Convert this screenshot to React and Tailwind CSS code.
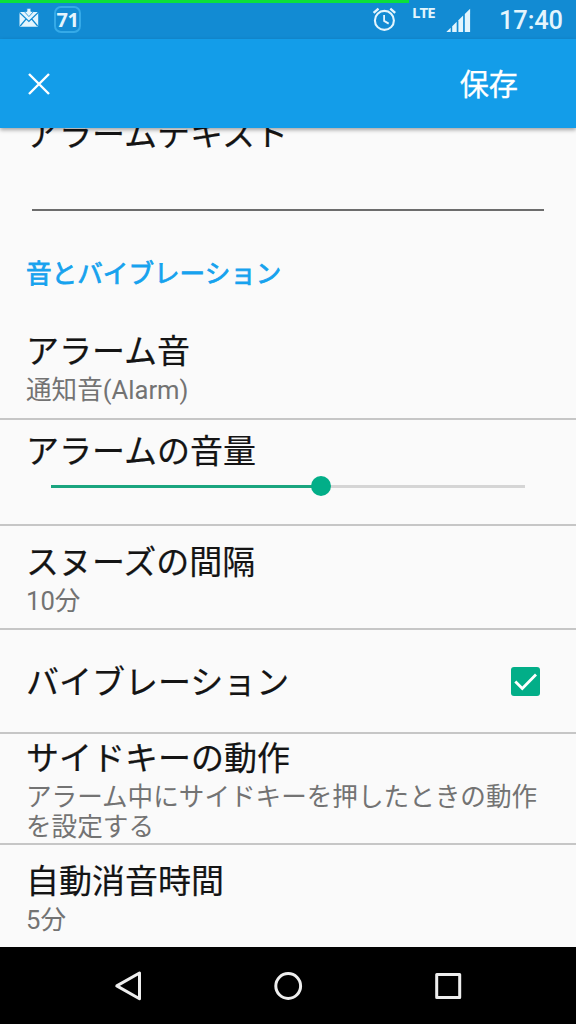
import React, { useState } from "react";

const MailIcon = () => (
    <svg className="h-[20px] w-[20px]" viewBox="0 0 20 20" fill="none">
        <path d="M0.5 5.2 Q0.5 4 1.7 4 H18 Q19.2 4 19.2 5.2 V17.6 Q19.2 18.8 18 18.8 H1.7 Q0.5 18.8 0.5 17.6 Z" fill="#e3f5fd" />
        <path d="M0.5 4.5 L9.9 13.4 L19.2 4.5 M1.2 18 L7.1 11 M18.6 18 L12.7 11" stroke="#128bd3" strokeWidth="1.2" />
        <path d="M7.9 0.3 H11.9 V3.4 H14.6 L9.9 8.6 L5.2 3.4 H7.9 Z" fill="#e3f5fd" stroke="#128bd3" strokeWidth="0.8" />
    </svg>
);

const AlarmIcon = () => (
    <svg className="h-[26px] w-[26px]" viewBox="0 0 26 26" fill="none" stroke="#e3f5fd">
        <circle cx="13.4" cy="14.4" r="9.5" strokeWidth="2.1" />
        <path d="M13.1 9 V14.9 L17.7 17.6" strokeWidth="1.8" />
        <path d="M2.6 6.9 L7.5 2.7 M24.2 6.9 L19.3 2.7" strokeWidth="2.4" />
    </svg>
);

const SignalIcon = () => (
    <svg className="h-[25px] w-[25px]" viewBox="0 0 25 25" fill="#e3f5fd">
        <path d="M0.3 24 L4.7 19.7 V24 Z" />
        <path d="M6.2 18.2 L10.7 13.8 V24 H6.2 Z" />
        <path d="M12.4 12.2 L17.1 7.5 V24 H12.4 Z" />
        <path d="M18.8 6 L24.1 0.8 V24 H18.8 Z" />
    </svg>
);

const StatusBar = () => (
    <div className="flex h-[39px] shrink-0 items-start bg-[#128bd3] text-[#e3f5fd]">
        <div className="mt-2 ml-[19px]">
            <MailIcon />
        </div>
        <div className="mt-[6px] ml-[15px] flex h-[27px] w-[27px] items-center justify-center rounded-[7px] border-2 border-[#35aae8] font-['Open_Sans'] text-[20px] font-bold tracking-[-0.5px]">
            71
        </div>
        <div className="mt-[6px] ml-[290px]">
            <AlarmIcon />
        </div>
        <div className="mt-1 ml-[15px] w-[24px] font-['Open_Sans'] text-[15px] leading-4 font-bold tracking-[-0.9px]">LTE</div>
        <div className="mt-2 ml-[10px]">
            <SignalIcon />
        </div>
        <div className="mt-[5px] ml-[28px] text-[25.4px] leading-[30px] font-medium tracking-[-0.1px]">17:40</div>
    </div>
);

const Title = ({ children }) => (
    <div className="text-[33px] leading-[38px] text-[#141414] [-webkit-text-stroke:0.2px_#141414]">{children}</div>
);

const Summary = ({ children }) => (
    <div className="mt-1 text-[25.6px] leading-[30px] text-[#737373]">{children}</div>
);

const Row = ({ title, children, className = "" }) => (
    <div className={`flex shrink-0 flex-col border-b-2 border-[#c6c6c6] px-[26px] ${className}`}>
        <Title>{title}</Title>
        {children}
    </div>
);

const VolumeSlider = ({ value }) => (
    <div className="mt-[5px] ml-[25px] flex h-5 w-[474px] items-center">
        <div className="h-[3px] bg-[#1aa57f]" style={{ width: `${value}%` }} />
        <div className="z-10 -mx-[10px] h-5 w-5 shrink-0 rounded-full bg-[#02ae88]" />
        <div className="h-[3px] flex-1 bg-[#d5d5d5]" />
    </div>
);

const Checkbox = ({ checked, onChange }) => (
    <button onClick={onChange} className="h-[29px] w-[29px] rounded-[3px] bg-[#02ae88]">
        {checked && (
            <svg viewBox="0 0 29 29" fill="none" stroke="#fff" strokeWidth="2.8">
                <path d="M4.3 14.5 L11.3 21.5 L25 7.6" />
            </svg>
        )}
    </button>
);

const NavBar = () => (
    <div className="flex h-[77px] shrink-0 items-center justify-between bg-black px-[112px]">
        <svg className="h-8 w-8" viewBox="0 0 32 32" fill="none" stroke="#eee" strokeWidth="3" strokeLinejoin="round">
            <path d="M27.5 3 V28.8 L4.8 15.9 Z" />
        </svg>
        <svg className="h-8 w-8" viewBox="0 0 32 32" fill="none" stroke="#eee" strokeWidth="3">
            <circle cx="16.2" cy="16" r="12.4" />
        </svg>
        <svg className="h-8 w-8" viewBox="0 0 32 32" fill="none" stroke="#eee" strokeWidth="3" strokeLinejoin="round">
            <rect x="4.7" y="4.5" width="23" height="23" />
        </svg>
    </div>
);

export default function App() {
    const [vibrate, setVibrate] = useState(true);

    return (
        <div className="relative flex h-[1024px] w-[576px] flex-col overflow-hidden bg-[#fafafa] font-[Roboto,'Noto_Sans_CJK_JP',sans-serif]">
            {/* Progress line over the status bar */}
            <div className="absolute top-0 left-0 h-[3px] w-[409px] bg-[#0be03b]" />
            <StatusBar />

            {/* Header */}
            <div className="z-10 flex h-[89px] shrink-0 items-center justify-between bg-[#139de9] pr-[58px] pl-[28px] text-white shadow-[0_2px_4px_rgba(0,0,0,0.35)]">
                <svg className="h-[22px] w-[22px]" viewBox="0 0 22 22" stroke="#fff" strokeWidth="2.4">
                    <path d="M1 1 L21 21 M21 1 L1 21" />
                </svg>
                <div className="pt-[3px] text-[29.2px] leading-[36px] [-webkit-text-stroke:0.3px_#fff]">保存</div>
            </div>

            {/* Settings, scrolled a little under the header */}
            <div className="flex h-[819px] shrink-0 flex-col overflow-hidden">
                <div className="-mt-[12px] px-[26px]">
                    <Title>アラームテキスト</Title>
                </div>
                <div className="mx-8 mt-[55px] h-[2px] shrink-0 bg-[#6c6c6c]" />
                <div className="mt-[48px] px-[26px] text-[25.6px] leading-[30px] text-[#16a2ee] [-webkit-text-stroke:0.8px_#16a2ee]">
                    音とバイブレーション
                </div>

                <Row title="アラーム音" className="mt-[44px] h-[87px]">
                    <Summary>通知音(Alarm)</Summary>
                </Row>
                <Row title="アラームの音量" className="h-[106px] pt-[13px]">
                    <VolumeSlider value={57} />
                </Row>
                <Row title="スヌーズの間隔" className="h-[104px] pt-[18px]">
                    <Summary>10分</Summary>
                </Row>
                <div className="flex h-[104px] shrink-0 items-center justify-between border-b-2 border-[#c6c6c6] pr-[36px] pl-[26px]">
                    <div className="pt-1">
                        <Title>バイブレーション</Title>
                    </div>
                    <Checkbox checked={vibrate} onChange={() => setVibrate(!vibrate)} />
                </div>
                <Row title="サイドキーの動作" className="h-[111px] pt-[6px]">
                    <Summary>アラーム中にサイドキーを押したときの動作を設定する</Summary>
                </Row>
                <div className="px-[26px] pt-[18px]">
                    <Title>自動消音時間</Title>
                    <Summary>5分</Summary>
                </div>
            </div>

            <NavBar />
        </div>
    );
}
